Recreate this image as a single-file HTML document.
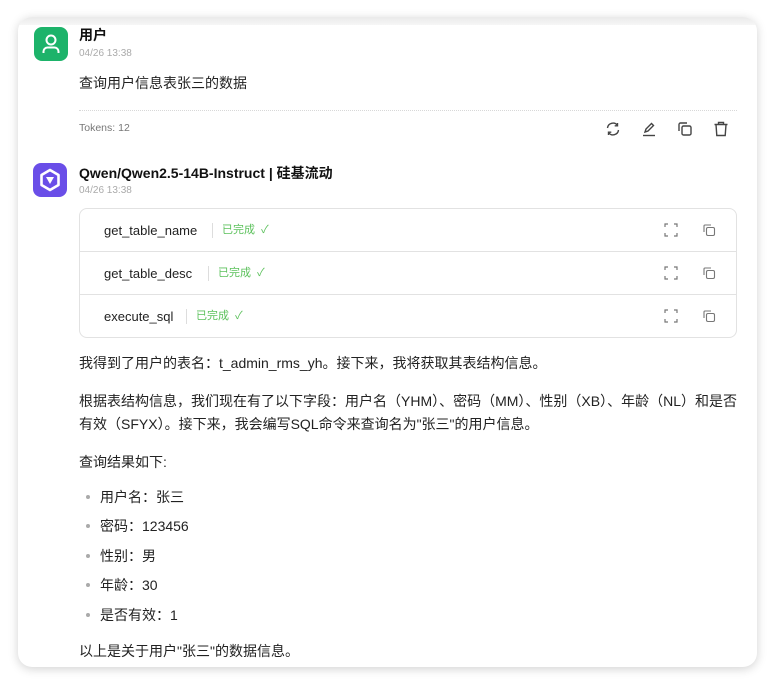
<!DOCTYPE html>
<html><head><meta charset="utf-8"><style>
*{margin:0;padding:0;box-sizing:border-box}
body{width:775px;height:685px;background:#fff;font-family:"Liberation Sans","Noto Sans CJK SC",sans-serif;color:#222;position:relative;overflow:hidden}
.card{position:absolute;left:18px;top:17px;width:739px;height:650px;background:#fff;border-radius:14px;box-shadow:0 2px 10px rgba(0,0,0,.18);overflow:hidden}
.topband{position:absolute;left:0;top:0;width:100%;height:8px;background:linear-gradient(#eaeaea,#f6f6f6)}
.abs{position:absolute}
.av{position:absolute;width:34px;height:34px;border-radius:8px}
.name{font-size:14px;font-weight:bold;color:#111}
.time{font-size:10px;color:#aaa}
.t{font-size:14px;color:#222;white-space:nowrap}
.tools{position:absolute;left:61px;top:191px;width:658px;height:130px;border:1px solid #e2e2e2;border-radius:8px}
.row{position:absolute;left:0;width:100%;height:43px;border-bottom:1px solid #e2e2e2}
.row .fn{position:absolute;left:24px;top:14px;font-size:13px;color:#222}
.row .st{position:absolute;top:14px;font-size:11px;color:#5cc15c;border-left:1px solid #ddd;padding-left:9px;line-height:15px;white-space:pre}
.ic{position:absolute}
.dot{position:absolute;width:4px;height:4px;border-radius:50%;background:#aaa}
</style></head><body>
<div class="card">
<div class="topband"></div>
<div class="av" style="left:16px;top:10px;background:#1db36a">
<svg width="34" height="34" viewBox="0 0 34 34"><circle cx="17" cy="13" r="4.5" fill="none" stroke="#fff" stroke-width="2"/><path d="M9.5 26v-1.5a4 4 0 0 1 4-4h7a4 4 0 0 1 4 4V26" fill="none" stroke="#fff" stroke-width="2"/></svg></div>
<div class="abs name" style="left:61px;top:8px">用户</div>
<div class="abs time" style="left:61px;top:31px">04/26 13:38</div>
<div class="abs t" style="left:61px;top:56px">查询用户信息表张三的数据</div>
<div class="abs" style="left:61px;top:93px;width:658px;border-top:1px dotted #d8d8d8"></div>
<div class="abs" style="left:61px;top:105px;font-size:10.5px;color:#777">Tokens: 12</div>
<svg class="ic" style="left:586px;top:103px" width="18" height="18" viewBox="0 0 18 18" fill="none" stroke="#444" stroke-width="1.4"><path d="M3.5 8a5.5 5.5 0 0 1 10-2.5M14.5 10a5.5 5.5 0 0 1-10 2.5"/><path d="M13.5 3v2.8h-2.8M4.5 15v-2.8h2.8"/></svg>
<svg class="ic" style="left:622px;top:103px" width="18" height="18" viewBox="0 0 18 18" fill="none" stroke="#444" stroke-width="1.4"><path d="M5 12l1-3 5.5-5.5 2 2L8 11z"/><path d="M3 15.5h12"/></svg>
<svg class="ic" style="left:658px;top:103px" width="18" height="18" viewBox="0 0 18 18" fill="none" stroke="#444" stroke-width="1.4"><rect x="6" y="6" width="9" height="9" rx="1.5"/><path d="M3 11V4.5A1.5 1.5 0 0 1 4.5 3H11"/></svg>
<svg class="ic" style="left:694px;top:103px" width="18" height="18" viewBox="0 0 18 18" fill="none" stroke="#444" stroke-width="1.4"><path d="M2.5 4.5h13M6.5 4.5V2.5h5v2M4 4.5l.8 11h8.4l.8-11"/></svg>

<div class="av" style="left:15px;top:146px;background:#6a4ee8">
<svg width="34" height="34" viewBox="0 0 34 34"><path d="M17 7l8.5 5v10L17 27l-8.5-5V12z" fill="none" stroke="#fff" stroke-width="2.6" stroke-linejoin="round"/><path d="M13 14h8l-4 7z" fill="#fff"/></svg></div>
<div class="abs name" style="left:61px;top:146px">Qwen/Qwen2.5-14B-Instruct | 硅基流动</div>
<div class="abs time" style="left:61px;top:168px">04/26 13:38</div>

<div class="tools">
<div class="row" style="top:0"><span class="fn">get_table_name</span><span class="st" style="left:132px">已完成  ✓</span></div>
<div class="row" style="top:43px"><span class="fn">get_table_desc</span><span class="st" style="left:128px">已完成  ✓</span></div>
<div class="row" style="top:86px;border-bottom:none"><span class="fn">execute_sql</span><span class="st" style="left:106px">已完成  ✓</span></div>
</div>
<svg class="ic" style="left:646px;top:206px" width="14" height="14" viewBox="0 0 14 14" fill="none" stroke="#777" stroke-width="1.2"><path d="M1 4V1h3M10 1h3v3M13 10v3h-3M4 13H1v-3"/></svg>
<svg class="ic" style="left:684px;top:206px" width="14" height="14" viewBox="0 0 14 14" fill="none" stroke="#777" stroke-width="1.1"><rect x="4.5" y="4.5" width="8" height="8" rx="1.5"/><path d="M2 9V3a1 1 0 0 1 1-1h6"/></svg>
<svg class="ic" style="left:646px;top:249px" width="14" height="14" viewBox="0 0 14 14" fill="none" stroke="#777" stroke-width="1.2"><path d="M1 4V1h3M10 1h3v3M13 10v3h-3M4 13H1v-3"/></svg>
<svg class="ic" style="left:684px;top:249px" width="14" height="14" viewBox="0 0 14 14" fill="none" stroke="#777" stroke-width="1.1"><rect x="4.5" y="4.5" width="8" height="8" rx="1.5"/><path d="M2 9V3a1 1 0 0 1 1-1h6"/></svg>
<svg class="ic" style="left:646px;top:292px" width="14" height="14" viewBox="0 0 14 14" fill="none" stroke="#777" stroke-width="1.2"><path d="M1 4V1h3M10 1h3v3M13 10v3h-3M4 13H1v-3"/></svg>
<svg class="ic" style="left:684px;top:292px" width="14" height="14" viewBox="0 0 14 14" fill="none" stroke="#777" stroke-width="1.1"><rect x="4.5" y="4.5" width="8" height="8" rx="1.5"/><path d="M2 9V3a1 1 0 0 1 1-1h6"/></svg>

<div class="abs t" style="left:61px;top:336px">我得到了用户的表名：t_admin_rms_yh。接下来，我将获取其表结构信息。</div>
<div class="abs t" style="left:61px;top:374px">根据表结构信息，我们现在有了以下字段：用户名（YHM）、密码（MM）、性别（XB）、年龄（NL）和是否</div>
<div class="abs t" style="left:61px;top:397px">有效（SFYX）。接下来，我会编写SQL命令来查询名为"张三"的用户信息。</div>
<div class="abs t" style="left:61px;top:435px">查询结果如下:</div>
<div class="dot" style="left:68px;top:478px"></div><div class="abs t" style="left:82px;top:470px">用户名：张三</div>
<div class="dot" style="left:68px;top:507px"></div><div class="abs t" style="left:82px;top:499px">密码：123456</div>
<div class="dot" style="left:68px;top:537px"></div><div class="abs t" style="left:82px;top:529px">性别：男</div>
<div class="dot" style="left:68px;top:566px"></div><div class="abs t" style="left:82px;top:558px">年龄：30</div>
<div class="dot" style="left:68px;top:596px"></div><div class="abs t" style="left:82px;top:588px">是否有效：1</div>
<div class="abs t" style="left:61px;top:624px">以上是关于用户"张三"的数据信息。</div>
</div>
</body></html>
